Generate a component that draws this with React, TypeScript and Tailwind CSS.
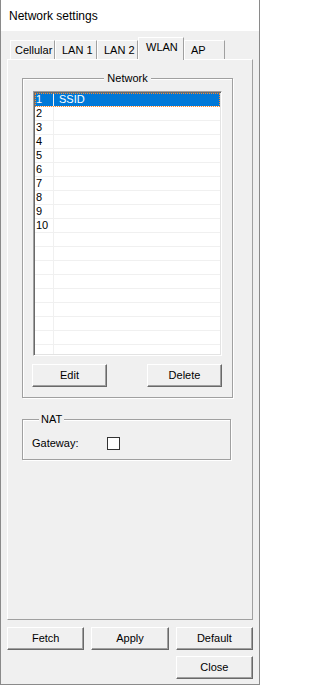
import React from 'react';

const tabs = [
  { label: 'Cellular', w: 'w-[45px] pl-[4px]' },
  { label: 'LAN 1', w: 'w-[42px] pl-[6px]' },
  { label: 'LAN 2', w: 'w-[41px] pl-[6px]' },
  { label: 'WLAN', w: 'w-[46px] pl-[7px]', active: true },
  { label: 'AP', w: 'w-[41px] pl-[6px]' },
];

const rows = Array.from({ length: 19 }, (_, i) => (i < 10 ? String(i + 1) : ''));

const Button: React.FC<{ label: string; className?: string }> = ({ label, className = '' }) => (
  <button
    className={`h-[23px] bg-[#f0f0f0] border border-t-white border-l-white border-r-[#696969] border-b-[#696969] shadow-[inset_-1px_-1px_0_#a0a0a0] text-[11px] leading-[13px] text-black ${className}`}
  >
    {label}
  </button>
);

export default function App() {
  return (
    <div
      className="w-[260px] h-[685px] flex flex-col border-x border-b border-[#8a8a8a] text-black"
      style={{ fontFamily: '"Liberation Sans", Arial, sans-serif' }}
    >
      <header className="h-[31px] bg-white flex items-center pl-[8px] text-[12px]">Network settings</header>

      <main className="flex-1 bg-[#f0f0f0] px-[6px] pt-[6px] text-[11px] leading-[13px]">
        {/* tab strip */}
        <nav className="h-[22px] flex items-end pl-[3px]">
          {tabs.map((t) =>
            t.active ? (
              <div
                key={t.label}
                className={`${t.w} h-[23px] -mb-px relative z-10 bg-[#f0f0f0] border-t border-l border-white border-r border-r-[#a0a0a0] pt-[3px]`}
              >
                {t.label}
              </div>
            ) : (
              <div
                key={t.label}
                className={`${t.w} h-[19px] flex items-center border-t border-l border-white border-r border-r-[#a0a0a0]`}
              >
                {t.label}
              </div>
            )
          )}
        </nav>

        {/* tab page */}
        <section className="h-[561px] border border-t-white border-l-white border-r-[#a0a0a0] border-b-[#a0a0a0] px-[14px] pt-[12px]">
          <fieldset className="w-[211px] border border-[#a0a0a0] shadow-[inset_1px_1px_0_#fff,1px_1px_0_#fff] px-[10px] pt-[6px] pb-[10px]">
            <legend className="mx-auto px-[3px] bg-[#f0f0f0] leading-[13px]">Network</legend>
            <div className="h-[265px] border border-t-[#a0a0a0] border-l-[#a0a0a0] border-r-white border-b-white shadow-[inset_1px_1px_0_#696969,inset_-1px_-1px_0_#e3e3e3] p-[1px] overflow-hidden">
              <div className="h-full bg-white overflow-hidden">
                {rows.map((n, i) => (
                  <div
                    key={i}
                    className={`h-[14px] flex border-b border-[#f0f0f0] ${
                      i === 0 ? 'bg-[#0078d7] text-white outline-1 outline-dotted outline-[#ff8728] -outline-offset-1' : ''
                    }`}
                  >
                    <span className="w-[19px] pl-[1px] border-r border-[#f0f0f0]">{n}</span>
                    <span className="pl-[5px]">{i === 0 ? 'SSID' : ''}</span>
                  </div>
                ))}
              </div>
            </div>
            <div className="flex justify-between mt-[8px] -ml-px">
              <Button label="Edit" className="w-[75px]" />
              <Button label="Delete" className="w-[75px]" />
            </div>
          </fieldset>

          <fieldset className="w-[209px] mt-[15px] border border-[#a0a0a0] shadow-[inset_1px_1px_0_#fff,1px_1px_0_#fff] pl-[9px] pt-[11px] pb-[9px]">
            <legend className="ml-[7px] px-[2px] bg-[#f0f0f0] leading-[13px]">NAT</legend>
            <div className="flex items-center">
              <span className="w-[75px]">Gateway:</span>
              <span className="w-[13px] h-[13px] border border-[#333333] bg-white" />
            </div>
          </fieldset>
        </section>

        <div className="grid grid-cols-3 gap-x-[7px] gap-y-[6px] mt-[7px]">
          <Button label="Fetch" />
          <Button label="Apply" />
          <Button label="Default" />
          <Button label="Close" className="col-start-3" />
        </div>
      </main>
    </div>
  );
}
